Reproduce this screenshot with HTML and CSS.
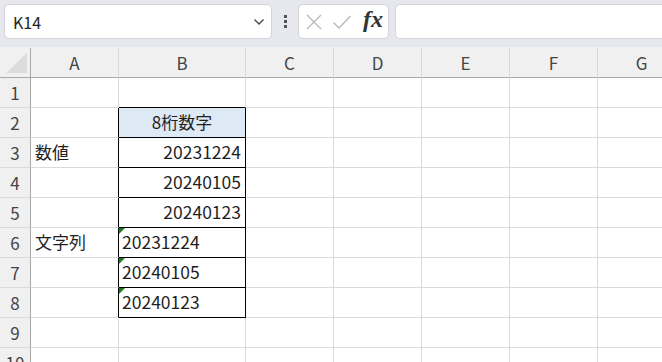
FILE: index.html
```html
<!DOCTYPE html>
<html lang="ja">
<head>
    <meta charset="UTF-8">
    <title>Sheet</title>
    <link rel="stylesheet" href="styles.css">
</head>
<body>
    <div class="app">
        <!-- Formula bar -->
        <div class="toolbar">
            <div class="name-box">
                <span class="name-text">K14</span>
                <svg class="chevron" width="12" height="8" viewBox="0 0 12 8"><path d="M1.5 1.5 L6 6 L10.5 1.5" fill="none" stroke="#444" stroke-width="1.3"/></svg>
            </div>
            <div class="dots"><span></span><span></span><span></span></div>
            <div class="fx-box">
                <svg width="18" height="18" viewBox="0 0 18 18"><path d="M2 2 L16 16 M16 2 L2 16" stroke="#b8b8b8" stroke-width="1.3" fill="none"/></svg>
                <svg width="20" height="16" viewBox="0 0 20 16"><path d="M1.5 8.5 L7 14 L18.5 2" stroke="#b8b8b8" stroke-width="1.3" fill="none"/></svg>
                <span class="fx">fx</span>
            </div>
            <div class="formula-input"></div>
        </div>

        <!-- Grid -->
        <div class="sheet">
            <div class="corner"><div class="corner-tri"></div></div>
            <div class="col-head">A</div>
            <div class="col-head">B</div>
            <div class="col-head">C</div>
            <div class="col-head">D</div>
            <div class="col-head">E</div>
            <div class="col-head">F</div>
            <div class="col-head">G</div>

            <div class="row-head">1</div>
            <div class="cell"></div><div class="cell b-top"></div><div class="cell"></div><div class="cell"></div><div class="cell"></div><div class="cell"></div><div class="cell"></div>

            <div class="row-head">2</div>
            <div class="cell b-left"></div><div class="cell boxed title">8桁数字</div><div class="cell"></div><div class="cell"></div><div class="cell"></div><div class="cell"></div><div class="cell"></div>

            <div class="row-head">3</div>
            <div class="cell b-left">数値</div><div class="cell boxed num">20231224</div><div class="cell"></div><div class="cell"></div><div class="cell"></div><div class="cell"></div><div class="cell"></div>

            <div class="row-head">4</div>
            <div class="cell b-left"></div><div class="cell boxed num">20240105</div><div class="cell"></div><div class="cell"></div><div class="cell"></div><div class="cell"></div><div class="cell"></div>

            <div class="row-head">5</div>
            <div class="cell b-left"></div><div class="cell boxed num">20240123</div><div class="cell"></div><div class="cell"></div><div class="cell"></div><div class="cell"></div><div class="cell"></div>

            <div class="row-head">6</div>
            <div class="cell b-left">文字列</div><div class="cell boxed str">20231224</div><div class="cell"></div><div class="cell"></div><div class="cell"></div><div class="cell"></div><div class="cell"></div>

            <div class="row-head">7</div>
            <div class="cell b-left"></div><div class="cell boxed str">20240105</div><div class="cell"></div><div class="cell"></div><div class="cell"></div><div class="cell"></div><div class="cell"></div>

            <div class="row-head">8</div>
            <div class="cell b-left"></div><div class="cell boxed str">20240123</div><div class="cell"></div><div class="cell"></div><div class="cell"></div><div class="cell"></div><div class="cell"></div>

            <div class="row-head">9</div>
            <div class="cell"></div><div class="cell"></div><div class="cell"></div><div class="cell"></div><div class="cell"></div><div class="cell"></div><div class="cell"></div>

            <div class="row-head">10</div>
            <div class="cell"></div><div class="cell"></div><div class="cell"></div><div class="cell"></div><div class="cell"></div><div class="cell"></div><div class="cell"></div>
        </div>
    </div>
</body>
</html>
```

FILE: styles.css
```css
* {
    margin: 0;
    padding: 0;
    box-sizing: border-box;
}

body {
    width: 662px;
    height: 362px;
    overflow: hidden;
    background: #ffffff;
    font-family: "Noto Sans CJK JP", "Noto Sans", sans-serif;
    color: #1f1f1f;
}

.app {
    display: flex;
    flex-direction: column;
    height: 100%;
}

/* Formula bar */
.toolbar {
    flex-shrink: 0;
    height: 48px;
    background: #e6e8ee;
    display: flex;
    align-items: flex-start;
    padding: 4px 0 0 4px;
    border-bottom: 1px solid #eef0f3;
}

.name-box {
    width: 268px;
    height: 35px;
    background: #ffffff;
    border: 1px solid #d2d4d9;
    border-radius: 5px;
    display: flex;
    align-items: center;
    justify-content: space-between;
    padding: 0 6px 0 8px;
}

.name-text {
    font-size: 16px;
    color: #222;
}

.dots {
    width: 26px;
    height: 35px;
    display: flex;
    flex-direction: column;
    align-items: center;
    justify-content: center;
    gap: 2px;
}

.dots span {
    width: 3px;
    height: 3px;
    background: #555;
}

.fx-box {
    width: 91px;
    height: 35px;
    background: #ffffff;
    border: 1px solid #d2d4d9;
    border-radius: 5px;
    display: flex;
    align-items: center;
    gap: 9px;
    padding-left: 6px;
}

.fx {
    font-family: "Liberation Serif", serif;
    font-style: italic;
    font-weight: bold;
    font-size: 24px;
    color: #333;
    margin-top: -4px;
    margin-left: 2px;
}

.formula-input {
    flex: 1;
    height: 35px;
    margin-left: 6px;
    background: #ffffff;
    border: 1px solid #d2d4d9;
    border-right: none;
    border-radius: 5px 0 0 5px;
}

/* Sheet grid */
.sheet {
    display: grid;
    grid-template-columns: 31px 88px 127px 88px 88px 88px 88px 88px;
    grid-template-rows: 30px repeat(10, 30px);
}

.corner,
.col-head,
.row-head {
    background: #f0f0f0;
    color: #444;
    font-size: 17px;
    display: flex;
    align-items: center;
    justify-content: center;
}

.corner {
    border-right: 1px solid #a9a9a9;
    border-bottom: 1px solid #a9a9a9;
    position: relative;
}

.corner-tri {
    position: absolute;
    right: 3px;
    bottom: 4px;
    width: 0;
    height: 0;
    border-left: 21px solid transparent;
    border-bottom: 20px solid #dcdcdc;
}

.col-head {
    border-right: 1px solid #dadada;
    border-bottom: 1px solid #a9a9a9;
}

.row-head {
    border-right: 1px solid #a9a9a9;
    border-bottom: 1px solid #dadada;
}

.cell {
    border-right: 1px solid #dadada;
    border-bottom: 1px solid #dadada;
    font-size: 17px;
    display: flex;
    align-items: center;
    padding: 0 4px 2px 4px;
    white-space: nowrap;
    position: relative;
}

.b-left {
    border-right-color: #000;
}

.b-top {
    border-bottom-color: #000;
}

.boxed {
    border-right-color: #000;
    border-bottom-color: #000;
}

.title {
    background: #dde9f5;
    justify-content: center;
}

.num {
    justify-content: flex-end;
    font-size: 17.5px;
}

.str {
    font-size: 17.5px;
    padding-left: 3px;
}

/* green error marker */
.str::before {
    content: "";
    position: absolute;
    left: 0;
    top: 0;
    border-top: 6px solid #1d7a1d;
    border-right: 6px solid transparent;
}
```
